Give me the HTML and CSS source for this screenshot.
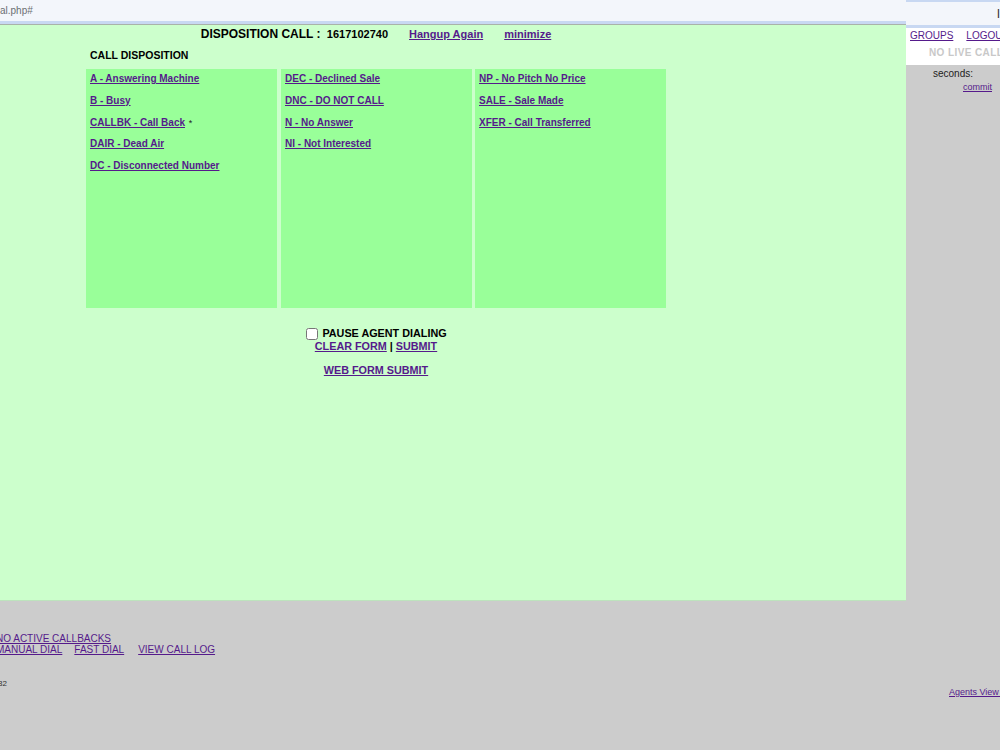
FILE: index.html
```html
<!DOCTYPE html>
<html>
<head>
<meta charset="utf-8">
<link rel="stylesheet" href="styles.css">
</head>
<body>
<div class="page">
  <div class="main">
    <div class="addr">al.php#</div>
    <div class="addr-line"></div>
    <div class="panel">
      <div class="disp">
        <div class="head">
          <span class="title">DISPOSITION CALL : <span class="num">1617102740</span></span>
          <a href="#" class="hlink">Hangup Again</a>
          <a href="#" class="hlink">minimize</a>
        </div>
        <div class="sub">CALL DISPOSITION</div>
        <div class="boxes">
          <div class="box first">
            <a href="#" class="item">A - Answering Machine</a>
            <a href="#" class="item">B - Busy</a>
            <div class="item"><a href="#">CALLBK - Call Back</a> <span class="star">*</span></div>
            <a href="#" class="item">DAIR - Dead Air</a>
            <a href="#" class="item">DC - Disconnected Number</a>
          </div>
          <div class="box">
            <a href="#" class="item">DEC - Declined Sale</a>
            <a href="#" class="item">DNC - DO NOT CALL</a>
            <a href="#" class="item">N - No Answer</a>
            <a href="#" class="item">NI - Not Interested</a>
          </div>
          <div class="box">
            <a href="#" class="item">NP - No Pitch No Price</a>
            <a href="#" class="item">SALE - Sale Made</a>
            <a href="#" class="item">XFER - Call Transferred</a>
          </div>
        </div>
        <div class="pause"><input type="checkbox" class="chk"><span>PAUSE AGENT DIALING</span></div>
        <div class="actions"><a href="#">CLEAR FORM</a> | <a href="#">SUBMIT</a></div>
        <div class="webform"><a href="#">WEB FORM SUBMIT</a></div>
      </div>
    </div>
    <div class="bottom">
      <div class="bline"><a href="#">NO ACTIVE CALLBACKS</a></div>
      <div class="bline"><a href="#">MANUAL DIAL</a><a href="#" class="gap1">FAST DIAL</a><a href="#" class="gap2">VIEW CALL LOG</a></div>
      <div class="tiny">32</div>
    </div>
  </div>
  <div class="side">
    <div class="stop"><span class="glyph">l</span></div>
    <div class="sbox">
      <div class="groups"><a href="#">GROUPS</a><a href="#" class="logout">LOGOUT</a></div>
      <div class="nolive">NO LIVE CALLS</div>
    </div>
    <div class="seconds">seconds:</div>
    <div class="commit"><a href="#">commit</a></div>
    <div class="agents"><a href="#">Agents View -</a></div>
  </div>
</div>
</body>
</html>
```

FILE: styles.css
```css
html, body {
  margin: 0;
  padding: 0;
}
body {
  width: 1000px;
  height: 750px;
  overflow: hidden;
  background: #cccccc;
  font-family: "Liberation Sans", Arial, sans-serif;
  color: #000;
}
a {
  color: #551a8b;
  text-decoration: underline;
}
.page {
  display: flex;
  width: 1000px;
}
.main {
  width: 906px;
  flex: none;
}
.addr {
  height: 21px;
  line-height: 21px;
  background: #f3f6fb;
  color: #6b6e72;
  font-size: 10px;
  white-space: nowrap;
}
.addr-line {
  height: 3px;
  background: #c8d8f2;
  border-bottom: 1px solid #a9b2a9;
}
.panel {
  height: 576px;
  box-sizing: border-box;
  background: #ccffcc;
  border-bottom: 1px solid #bde3bd;
}
.disp {
  width: 580px;
  margin-left: 86px;
}
.head {
  padding-top: 1px;
  height: 16px;
  line-height: 16px;
  display: flex;
  justify-content: center;
  align-items: baseline;
  gap: 21px;
  white-space: nowrap;
}
.title {
  font-size: 12px;
  font-weight: bold;
}
.num {
  font-size: 11px;
  margin-left: 3px;
}
.hlink {
  font-size: 11px;
  font-weight: bold;
}
.sub {
  margin-top: 6px;
  height: 14px;
  line-height: 14px;
  padding-left: 4px;
  font-size: 10.5px;
  font-weight: bold;
}
.boxes {
  margin-top: 7px;
  display: grid;
  grid-template-columns: 192px 191px 191px;
  column-gap: 3px;
}
.box {
  height: 239px;
  box-sizing: border-box;
  background: #99ff99;
  padding: 3px 4px 0;
}
.box.first {
  margin-right: 1px;
}
.item {
  display: block;
  width: max-content;
  height: 14px;
  line-height: 14px;
  margin-bottom: 7.75px;
  font-size: 10px;
  font-weight: bold;
  white-space: nowrap;
}
.star {
  font-weight: normal;
  font-size: 9px;
  color: #222;
  margin-left: 1px;
}
.pause {
  margin-top: 19px;
  height: 13px;
  line-height: 13px;
  display: flex;
  justify-content: center;
  align-items: center;
  font-size: 10.8px;
  font-weight: bold;
}
.chk {
  width: 12px;
  height: 12px;
  margin: 0 4px 0 1px;
}
.actions {
  height: 13px;
  line-height: 13px;
  text-align: center;
  font-size: 10.8px;
  font-weight: bold;
}
.webform {
  margin-top: 11px;
  height: 13px;
  line-height: 13px;
  text-align: center;
  font-size: 10.8px;
  font-weight: bold;
}
.bottom {
  padding-top: 32px;
  margin-left: -4px;
}
.bline {
  height: 11px;
  line-height: 11px;
  font-size: 10px;
  white-space: nowrap;
}
.gap1 {
  margin-left: 12px;
}
.gap2 {
  margin-left: 14px;
}
.tiny {
  margin-top: 24px;
  margin-left: 2px;
  height: 10px;
  line-height: 10px;
  font-size: 8px;
  color: #333;
}
.side {
  width: 94px;
  flex: none;
  overflow: hidden;
}
.stop {
  height: 23px;
  background: #f3f6fb;
  border-top: 2px solid #c8d8f2;
  border-bottom: 3px solid #c8d8f2;
  position: relative;
}
.glyph {
  position: absolute;
  left: 91px;
  top: 4px;
  font-size: 13px;
  color: #333;
}
.sbox {
  height: 37px;
  background: #ffffff;
  white-space: nowrap;
}
.groups {
  padding-top: 1px;
  height: 14px;
  line-height: 14px;
  padding-left: 4px;
  font-size: 10px;
}
.logout {
  margin-left: 13px;
}
.nolive {
  margin-top: 4px;
  height: 12px;
  line-height: 12px;
  padding-left: 23px;
  font-size: 10px;
  font-weight: bold;
  letter-spacing: 0.4px;
  color: #c8c8c8;
}
.seconds {
  margin-top: 3px;
  height: 12px;
  line-height: 12px;
  padding-left: 27px;
  font-size: 10px;
  color: #222;
}
.commit {
  margin-top: 2px;
  height: 10px;
  line-height: 10px;
  padding-left: 57px;
  font-size: 9px;
}
.agents {
  margin-top: 595px;
  height: 10px;
  line-height: 10px;
  padding-left: 43px;
  font-size: 9px;
  white-space: nowrap;
}
```
